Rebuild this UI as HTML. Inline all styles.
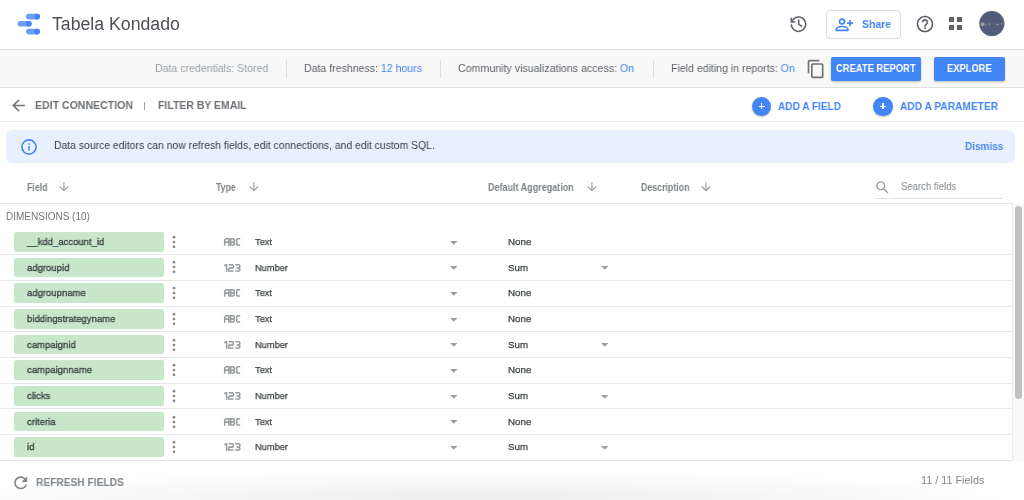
<!DOCTYPE html>
<html><head><meta charset="utf-8">
<style>
*{box-sizing:border-box;margin:0;padding:0}
html,body{width:1024px;height:500px;overflow:hidden;background:#fff;font-family:"Liberation Sans",sans-serif}
.a{position:absolute}
.t{position:absolute;line-height:1;white-space:nowrap;will-change:transform}
svg{position:absolute;overflow:visible}
.chip{position:absolute;left:14px;width:150.2px;height:19.5px;background:#c8e6c9;border-radius:2.5px}
.fn{left:26.5px;-webkit-text-stroke:.3px #3c4043;transform:scaleX(.971);transform-origin:0 0;font-size:9.8px;color:#3c4043}
.dot{position:absolute;left:172.7px;width:2.6px;height:2.6px;border-radius:50%;background:#80868b}
.ic{left:223.8px}
.ty{left:254.8px;-webkit-text-stroke:.25px #3c4043;transform:scaleX(.944);transform-origin:0 0;font-size:9.8px;color:#3c4043}
.ag{left:507.5px;-webkit-text-stroke:.25px #3c4043;transform:scaleX(.992);transform-origin:0 0;font-size:9.8px;color:#3c4043}
.tri{position:absolute;width:0;height:0;border-left:3.8px solid transparent;border-right:3.8px solid transparent;border-top:3.6px solid #80868b}
.rl{position:absolute;left:0;width:1012px;height:1px;background:#e8e8e8}
</style></head><body>
<!-- HEADER -->
<div class="a" style="left:0;top:0;width:1024px;height:49px;background:#fff"></div>
<div class="a" style="left:0;top:49px;width:1024px;height:1px;background:#e0e0e0"></div>
<!-- logo -->
<svg style="left:0;top:0" width="60" height="48">
  <rect x="26" y="13.8" width="14" height="5.6" rx="2.8" fill="#6c9ef5"/>
  <circle cx="37.2" cy="16.6" r="2.8" fill="#4285f4"/>
  <rect x="17.6" y="21" width="14" height="5.6" rx="2.8" fill="#6c9ef5"/>
  <circle cx="28.8" cy="23.8" r="2.8" fill="#4285f4"/>
  <rect x="26" y="28.8" width="14" height="5.6" rx="2.8" fill="#6c9ef5"/>
  <circle cx="37.2" cy="31.6" r="2.8" fill="#4285f4"/>
</svg>
<div id="title" class="t" style="transform:scaleX(1.005);transform-origin:0 0;left:52px;top:16.2px;font-size:17.6px;color:#4d5156">Tabela Kondado</div>

<!-- history icon -->
<svg style="left:787px;top:13px" width="23" height="22" viewBox="0 0 23 22"><g fill="none" stroke="#5f6368" stroke-width="1.55"><path d="M6.4 6.1A7.2 7.2 0 1 1 4.3 11.3"/><path d="M4.3 4.7V8.9H8.4M4.6 8.6L6.6 6.0"/><path d="M11.7 6.6V11.2L15 13.7"/></g></svg>
<!-- share button -->
<div class="a" style="left:826px;top:9.5px;width:74.5px;height:29px;border:1px solid #dadce0;border-radius:4px"></div>
<svg style="left:832px;top:14px" width="26" height="22" viewBox="0 0 26 22"><g fill="none" stroke="#4285f4" stroke-width="1.7"><circle cx="10" cy="7.5" r="2.45"/><path d="M4.3 16.4V15.3C4.3 13.5 7.5 12.5 10.1 12.5S15.9 13.5 15.9 15.3V16.4Z" stroke-linejoin="round"/><path d="M15 9.1H20.9M17.95 5.9V12.3"/></g></svg>
<div id="share" class="t" style="transform:scaleX(0.91);transform-origin:0 0;left:862px;top:18.5px;font-size:11.5px;font-weight:bold;color:#4285f4">Share</div>
<!-- help -->
<svg style="left:914.6px;top:13.9px" width="20" height="20" viewBox="0 0 24 24"><path fill="#5f6368" d="M11 18h2v-2h-2v2zm1-16C6.48 2 2 6.48 2 12s4.48 10 10 10 10-4.48 10-10S17.52 2 12 2zm0 18c-4.41 0-8-3.590-8-8s3.59-8 8-8 8 3.59 8 8-3.59 8-8 8zm0-14c-2.21 0-4 1.79-4 4h2c0-1.1.9-2 2-2s2 .9 2 2c0 2-3 1.75-3 5h2c0-2.25 3-2.5 3-5 0-2.21-1.79-4-4-4z"/></svg>
<!-- apps -->
<div class="a" style="left:949px;top:16.7px;width:5px;height:5px;background:#5f6368"></div>
<div class="a" style="left:957.4px;top:16.7px;width:5px;height:5px;background:#5f6368"></div>
<div class="a" style="left:949px;top:24.8px;width:5px;height:5px;background:#5f6368"></div>
<div class="a" style="left:957.4px;top:24.8px;width:5px;height:5px;background:#5f6368"></div>
<!-- avatar -->
<svg style="left:976px;top:8px" width="32" height="32" viewBox="0 0 32 32">
<circle cx="15.85" cy="15.55" r="12.5" fill="#535b7a" stroke="#7d7f78" stroke-width=".5"/>
<circle cx="6.6" cy="16.3" r="2" fill="#9a9d94"/>
<path d="M10.2 15.8V17.2H11.5M13.5 15.2V17.6M13.5 16H15M17.4 16.3h.8M20.3 15.5V17.4M22 15.5V17.4M20.3 16.5H23M25.2 15.2L26 16.6L27 15.2" fill="none" stroke="#8f9288" stroke-width=".8"/>
</svg>
<!-- TOOLBAR -->
<div class="a" style="left:0;top:50px;width:1024px;height:37px;background:#f8f8f8"></div>
<div class="a" style="left:0;top:87px;width:1024px;height:1px;background:#e0e0e0"></div>
<div id="cred" class="t" style="transform:scaleX(0.96);transform-origin:0 0;left:155px;top:62.5px;font-size:11px;color:#9aa0a6">Data credentials: Stored</div>
<div class="a" style="left:285.5px;top:60px;width:1px;height:18px;background:#e0e0e0"></div>
<div id="fresh" class="t" style="transform:scaleX(0.96);transform-origin:0 0;left:304px;top:62.5px;font-size:11px;color:#5f6368">Data freshness: <span style="color:#4285f4">12 hours</span></div>
<div class="a" style="left:439.5px;top:60px;width:1px;height:18px;background:#e0e0e0"></div>
<div id="comm" class="t" style="transform:scaleX(0.967);transform-origin:0 0;left:458px;top:62.5px;font-size:11px;color:#5f6368">Community visualizations access: <span style="color:#4285f4">On</span></div>
<div class="a" style="left:652.5px;top:60px;width:1px;height:18px;background:#e0e0e0"></div>
<div id="fedit" class="t" style="transform:scaleX(0.96);transform-origin:0 0;left:671px;top:62.5px;font-size:11px;color:#5f6368">Field editing in reports: <span style="color:#4285f4">On</span></div>
<!-- copy icon -->
<svg style="left:805.7px;top:59.2px" width="20" height="20" viewBox="0 0 24 24"><path fill="#707070" d="M16 1H4c-1.1 0-2 .9-2 2v14h2V3h12V1zm3 4H8c-1.1 0-2 .9-2 2v14c0 1.1.9 2 2 2h11c1.1 0 2-.9 2-2V7c0-1.1-.9-2-2-2zm0 16H8V7h11v14z"/></svg>
<div class="a" style="left:831.4px;top:57.1px;width:89.6px;height:23.6px;background:#4285f4;border-radius:2px;box-shadow:0 1px 2px rgba(0,0,0,.25)"></div>
<div id="cr" class="t" style="transform:scaleX(0.893);transform-origin:0 0;left:836.3px;top:62.8px;font-size:10.5px;font-weight:bold;color:#fff">CREATE REPORT</div>
<div class="a" style="left:934.3px;top:57.1px;width:70.4px;height:23.6px;background:#4285f4;border-radius:2px;box-shadow:0 1px 2px rgba(0,0,0,.25)"></div>
<div id="ex" class="t" style="transform:scaleX(0.89);transform-origin:0 0;left:947.3px;top:62.8px;font-size:10.5px;font-weight:bold;color:#fff">EXPLORE</div>

<!-- NAV ROW -->
<div class="a" style="left:0;top:121px;width:1024px;height:1px;background:#eeeeee"></div>
<svg style="left:9.15px;top:95.65px" width="19" height="19" viewBox="0 0 24 24"><path fill="#6f7173" d="M20 11H7.83l5.59-5.59L12 4l-8 8 8 8 1.41-1.41L7.83 13H20v-2z"/></svg>
<div id="editc" class="t" style="transform:scaleX(0.944);transform-origin:0 0;left:34.8px;top:99.5px;font-size:11.2px;font-weight:bold;color:#6d7175">EDIT CONNECTION</div>
<div class="a" style="left:144px;top:101.5px;width:1px;height:8px;background:#a0a0a0"></div>
<div id="filt" class="t" style="transform:scaleX(0.936);transform-origin:0 0;left:157.6px;top:99.5px;font-size:11.2px;font-weight:bold;color:#6d7175">FILTER BY EMAIL</div>
<div class="a" style="left:752.1px;top:96.9px;width:19.3px;height:19.3px;border-radius:50%;background:#4285f4;box-shadow:0 1px 2px rgba(0,0,0,.25)"></div>
<div class="a" style="left:758.5px;top:105.5px;width:6px;height:1.8px;background:#fff"></div>
<div class="a" style="left:760.6px;top:103.4px;width:1.8px;height:6px;background:#fff"></div>
<div id="addf" class="t" style="transform:scaleX(0.9);transform-origin:0 0;left:778px;top:101.4px;font-size:11.2px;font-weight:bold;color:#4285f4">ADD A FIELD</div>
<div class="a" style="left:873.3px;top:96.9px;width:19.3px;height:19.3px;border-radius:50%;background:#4285f4;box-shadow:0 1px 2px rgba(0,0,0,.25)"></div>
<div class="a" style="left:880px;top:105.5px;width:6px;height:1.8px;background:#fff"></div>
<div class="a" style="left:882.1px;top:103.4px;width:1.8px;height:6px;background:#fff"></div>
<div id="addp" class="t" style="transform:scaleX(0.91);transform-origin:0 0;left:900px;top:101.4px;font-size:11.2px;font-weight:bold;color:#4285f4">ADD A PARAMETER</div>

<!-- BANNER -->
<div class="a" style="left:6px;top:130.4px;width:1009px;height:32.2px;background:#e8f0fe;border-radius:6px"></div>
<svg style="left:20.5px;top:138.5px" width="16" height="16" viewBox="0 0 16 16">
  <circle cx="8" cy="8" r="7.1" fill="none" stroke="#4285f4" stroke-width="1.6"/>
  <rect x="7.25" y="7" width="1.5" height="4.6" fill="#4285f4"/>
  <rect x="7.25" y="4.3" width="1.5" height="1.5" fill="#4285f4"/>
</svg>
<div id="bantxt" class="t" style="transform:scaleX(0.945);transform-origin:0 0;left:54px;top:140px;font-size:11px;color:#3c4043">Data source editors can now refresh fields, edit connections, and edit custom SQL.</div>
<div id="dismiss" class="t" style="transform:scaleX(0.91);transform-origin:0 0;left:965px;top:140.5px;font-size:11px;font-weight:bold;color:#4a88f2">Dismiss</div>

<!-- COLUMN HEADERS -->
<div id="hfield" class="t" style="transform:scaleX(0.88);transform-origin:0 0;left:26.7px;top:182.5px;font-size:10px;font-weight:bold;color:#7f8386">Field</div>
<div id="htype" class="t" style="transform:scaleX(0.875);transform-origin:0 0;left:216px;top:182.5px;font-size:10px;font-weight:bold;color:#7f8386">Type</div>
<div id="hagg" class="t" style="transform:scaleX(0.9);transform-origin:0 0;left:488px;top:182.5px;font-size:10px;font-weight:bold;color:#7f8386">Default Aggregation</div>
<div id="hdesc" class="t" style="transform:scaleX(0.88);transform-origin:0 0;left:641px;top:182.5px;font-size:10px;font-weight:bold;color:#7f8386">Description</div>
<svg style="left:57.1px;top:180.4px" width="13.8" height="13.8" viewBox="0 0 24 24"><path fill="#9aa0a6" d="M20 12l-1.41-1.41L13 16.17V4h-2v12.17l-5.58-5.59L4 12l8 8 8-8z"/></svg>
<svg style="left:246.5px;top:180.4px" width="13.8" height="13.8" viewBox="0 0 24 24"><path fill="#9aa0a6" d="M20 12l-1.41-1.41L13 16.17V4h-2v12.17l-5.58-5.59L4 12l8 8 8-8z"/></svg>
<svg style="left:585.1px;top:180.4px" width="13.8" height="13.8" viewBox="0 0 24 24"><path fill="#9aa0a6" d="M20 12l-1.41-1.41L13 16.17V4h-2v12.17l-5.58-5.59L4 12l8 8 8-8z"/></svg>
<svg style="left:699.3px;top:180.4px" width="13.8" height="13.8" viewBox="0 0 24 24"><path fill="#9aa0a6" d="M20 12l-1.41-1.41L13 16.17V4h-2v12.17l-5.58-5.59L4 12l8 8 8-8z"/></svg>
<!-- search -->
<svg style="left:874px;top:179px" width="17" height="17" viewBox="0 0 24 24"><path fill="#9aa0a6" d="M15.5 14h-.79l-.28-.27A6.471 6.471 0 0 0 16 9.5 6.5 6.5 0 1 0 9.5 16c1.61 0 3.09-.59 4.23-1.57l.27.28v.79l5 4.99L20.49 19l-4.99-5zm-6 0C7.01 14 5 11.99 5 9.5S7.01 5 9.5 5 14 7.01 14 9.5 11.99 14 9.5 14z"/></svg>
<div id="search" class="t" style="transform:scaleX(0.956);transform-origin:0 0;left:900.5px;top:182px;font-size:10px;color:#80868b">Search fields</div>
<div class="a" style="left:875px;top:198px;width:128px;height:1px;background:#e0e0e0"></div>
<div class="a" style="left:0;top:203px;width:1012px;height:1px;background:#dfdfdf"></div>

<div id="dims" class="t" style="left:6px;top:211.5px;font-size:10px;color:#757575">DIMENSIONS (10)</div>

<!-- scrollbar -->
<div class="a" style="left:1012px;top:203px;width:12px;height:258px;background:#fafafa;border-left:1px solid #ebebeb"></div>
<div class="a" style="left:1015px;top:206px;width:6.8px;height:193px;border-radius:3.4px;background:#c1c1c1"></div>
<div class="a" style="left:0;top:459.5px;width:1012px;height:1.2px;background:#e2e2e2"></div>

<div id="rows">
<div class="chip" style="top:232.00px"></div>
<div class="t fn" style="top:236.90px">__kdd_account_id</div>
<svg style="left:170px;top:233.80px" width="8" height="16" viewBox="0 0 8 16"><g fill="#85888a"><circle cx="4" cy="3.2" r="1.35"/><circle cx="4" cy="8" r="1.35"/><circle cx="4" cy="12.8" r="1.35"/></g></svg>
<svg class="ic" style="top:237.95px" width="17" height="8" viewBox="0 0 17 8"><path d="M0.7 7.7V2.1L2.1 0.7H4.8V7.7M0.7 4.1H4.8M6.6 0V7.7M6.6 0.7H9.4L10.3 1.6V3.2L9.4 4.1H6.6M9.4 4.1L10.3 5V6.1L9.4 7H6.6M16.2 0.7H13.5L12.7 1.5V6.2L13.5 7H16.2" fill="none" stroke="#999c9e" stroke-width="1.55"/></svg>
<div class="t ty" style="top:236.90px">Text</div>
<svg style="left:449.5px;top:240.60px" width="7.5" height="4" viewBox="0 0 7.5 4"><path d="M0 0H7.5L3.75 3.75Z" fill="#9e9e9e"/></svg>
<div class="t ag" style="top:236.90px">None</div>
<div class="rl" style="top:254.30px"></div>
<div class="chip" style="top:257.68px"></div>
<div class="t fn" style="top:262.58px">adgroupid</div>
<svg style="left:170px;top:259.48px" width="8" height="16" viewBox="0 0 8 16"><g fill="#85888a"><circle cx="4" cy="3.2" r="1.35"/><circle cx="4" cy="8" r="1.35"/><circle cx="4" cy="12.8" r="1.35"/></g></svg>
<svg class="ic" style="top:263.63px" width="17" height="8" viewBox="0 0 17 8"><path d="M0.2 1.9L2.0 0.7H2.6V7.7M4.7 0.7H8.5L9.3 1.5V3.2L8.5 4.1H5.5L4.7 4.9V7H9.5M11.2 0.7H15L15.8 1.5V3.2L15 4.1H12.6M15 4.1L15.8 4.9V6.2L15 7H11.2" fill="none" stroke="#999c9e" stroke-width="1.55"/></svg>
<div class="t ty" style="top:262.58px">Number</div>
<svg style="left:449.5px;top:266.28px" width="7.5" height="4" viewBox="0 0 7.5 4"><path d="M0 0H7.5L3.75 3.75Z" fill="#9e9e9e"/></svg>
<div class="t ag" style="top:262.58px">Sum</div>
<svg style="left:601.3px;top:266.28px" width="7.5" height="4" viewBox="0 0 7.5 4"><path d="M0 0H7.5L3.75 3.75Z" fill="#9e9e9e"/></svg>
<div class="rl" style="top:279.98px"></div>
<div class="chip" style="top:283.36px"></div>
<div class="t fn" style="top:288.26px">adgroupname</div>
<svg style="left:170px;top:285.16px" width="8" height="16" viewBox="0 0 8 16"><g fill="#85888a"><circle cx="4" cy="3.2" r="1.35"/><circle cx="4" cy="8" r="1.35"/><circle cx="4" cy="12.8" r="1.35"/></g></svg>
<svg class="ic" style="top:289.31px" width="17" height="8" viewBox="0 0 17 8"><path d="M0.7 7.7V2.1L2.1 0.7H4.8V7.7M0.7 4.1H4.8M6.6 0V7.7M6.6 0.7H9.4L10.3 1.6V3.2L9.4 4.1H6.6M9.4 4.1L10.3 5V6.1L9.4 7H6.6M16.2 0.7H13.5L12.7 1.5V6.2L13.5 7H16.2" fill="none" stroke="#999c9e" stroke-width="1.55"/></svg>
<div class="t ty" style="top:288.26px">Text</div>
<svg style="left:449.5px;top:291.96px" width="7.5" height="4" viewBox="0 0 7.5 4"><path d="M0 0H7.5L3.75 3.75Z" fill="#9e9e9e"/></svg>
<div class="t ag" style="top:288.26px">None</div>
<div class="rl" style="top:305.66px"></div>
<div class="chip" style="top:309.04px"></div>
<div class="t fn" style="top:313.94px">biddingstrategyname</div>
<svg style="left:170px;top:310.84px" width="8" height="16" viewBox="0 0 8 16"><g fill="#85888a"><circle cx="4" cy="3.2" r="1.35"/><circle cx="4" cy="8" r="1.35"/><circle cx="4" cy="12.8" r="1.35"/></g></svg>
<svg class="ic" style="top:314.99px" width="17" height="8" viewBox="0 0 17 8"><path d="M0.7 7.7V2.1L2.1 0.7H4.8V7.7M0.7 4.1H4.8M6.6 0V7.7M6.6 0.7H9.4L10.3 1.6V3.2L9.4 4.1H6.6M9.4 4.1L10.3 5V6.1L9.4 7H6.6M16.2 0.7H13.5L12.7 1.5V6.2L13.5 7H16.2" fill="none" stroke="#999c9e" stroke-width="1.55"/></svg>
<div class="t ty" style="top:313.94px">Text</div>
<svg style="left:449.5px;top:317.64px" width="7.5" height="4" viewBox="0 0 7.5 4"><path d="M0 0H7.5L3.75 3.75Z" fill="#9e9e9e"/></svg>
<div class="t ag" style="top:313.94px">None</div>
<div class="rl" style="top:331.34px"></div>
<div class="chip" style="top:334.72px"></div>
<div class="t fn" style="top:339.62px">campaignid</div>
<svg style="left:170px;top:336.52px" width="8" height="16" viewBox="0 0 8 16"><g fill="#85888a"><circle cx="4" cy="3.2" r="1.35"/><circle cx="4" cy="8" r="1.35"/><circle cx="4" cy="12.8" r="1.35"/></g></svg>
<svg class="ic" style="top:340.67px" width="17" height="8" viewBox="0 0 17 8"><path d="M0.2 1.9L2.0 0.7H2.6V7.7M4.7 0.7H8.5L9.3 1.5V3.2L8.5 4.1H5.5L4.7 4.9V7H9.5M11.2 0.7H15L15.8 1.5V3.2L15 4.1H12.6M15 4.1L15.8 4.9V6.2L15 7H11.2" fill="none" stroke="#999c9e" stroke-width="1.55"/></svg>
<div class="t ty" style="top:339.62px">Number</div>
<svg style="left:449.5px;top:343.32px" width="7.5" height="4" viewBox="0 0 7.5 4"><path d="M0 0H7.5L3.75 3.75Z" fill="#9e9e9e"/></svg>
<div class="t ag" style="top:339.62px">Sum</div>
<svg style="left:601.3px;top:343.32px" width="7.5" height="4" viewBox="0 0 7.5 4"><path d="M0 0H7.5L3.75 3.75Z" fill="#9e9e9e"/></svg>
<div class="rl" style="top:357.02px"></div>
<div class="chip" style="top:360.40px"></div>
<div class="t fn" style="top:365.30px">campaignname</div>
<svg style="left:170px;top:362.20px" width="8" height="16" viewBox="0 0 8 16"><g fill="#85888a"><circle cx="4" cy="3.2" r="1.35"/><circle cx="4" cy="8" r="1.35"/><circle cx="4" cy="12.8" r="1.35"/></g></svg>
<svg class="ic" style="top:366.35px" width="17" height="8" viewBox="0 0 17 8"><path d="M0.7 7.7V2.1L2.1 0.7H4.8V7.7M0.7 4.1H4.8M6.6 0V7.7M6.6 0.7H9.4L10.3 1.6V3.2L9.4 4.1H6.6M9.4 4.1L10.3 5V6.1L9.4 7H6.6M16.2 0.7H13.5L12.7 1.5V6.2L13.5 7H16.2" fill="none" stroke="#999c9e" stroke-width="1.55"/></svg>
<div class="t ty" style="top:365.30px">Text</div>
<svg style="left:449.5px;top:369.00px" width="7.5" height="4" viewBox="0 0 7.5 4"><path d="M0 0H7.5L3.75 3.75Z" fill="#9e9e9e"/></svg>
<div class="t ag" style="top:365.30px">None</div>
<div class="rl" style="top:382.70px"></div>
<div class="chip" style="top:386.08px"></div>
<div class="t fn" style="top:390.98px">clicks</div>
<svg style="left:170px;top:387.88px" width="8" height="16" viewBox="0 0 8 16"><g fill="#85888a"><circle cx="4" cy="3.2" r="1.35"/><circle cx="4" cy="8" r="1.35"/><circle cx="4" cy="12.8" r="1.35"/></g></svg>
<svg class="ic" style="top:392.03px" width="17" height="8" viewBox="0 0 17 8"><path d="M0.2 1.9L2.0 0.7H2.6V7.7M4.7 0.7H8.5L9.3 1.5V3.2L8.5 4.1H5.5L4.7 4.9V7H9.5M11.2 0.7H15L15.8 1.5V3.2L15 4.1H12.6M15 4.1L15.8 4.9V6.2L15 7H11.2" fill="none" stroke="#999c9e" stroke-width="1.55"/></svg>
<div class="t ty" style="top:390.98px">Number</div>
<svg style="left:449.5px;top:394.68px" width="7.5" height="4" viewBox="0 0 7.5 4"><path d="M0 0H7.5L3.75 3.75Z" fill="#9e9e9e"/></svg>
<div class="t ag" style="top:390.98px">Sum</div>
<svg style="left:601.3px;top:394.68px" width="7.5" height="4" viewBox="0 0 7.5 4"><path d="M0 0H7.5L3.75 3.75Z" fill="#9e9e9e"/></svg>
<div class="rl" style="top:408.38px"></div>
<div class="chip" style="top:411.76px"></div>
<div class="t fn" style="top:416.66px">criteria</div>
<svg style="left:170px;top:413.56px" width="8" height="16" viewBox="0 0 8 16"><g fill="#85888a"><circle cx="4" cy="3.2" r="1.35"/><circle cx="4" cy="8" r="1.35"/><circle cx="4" cy="12.8" r="1.35"/></g></svg>
<svg class="ic" style="top:417.71px" width="17" height="8" viewBox="0 0 17 8"><path d="M0.7 7.7V2.1L2.1 0.7H4.8V7.7M0.7 4.1H4.8M6.6 0V7.7M6.6 0.7H9.4L10.3 1.6V3.2L9.4 4.1H6.6M9.4 4.1L10.3 5V6.1L9.4 7H6.6M16.2 0.7H13.5L12.7 1.5V6.2L13.5 7H16.2" fill="none" stroke="#999c9e" stroke-width="1.55"/></svg>
<div class="t ty" style="top:416.66px">Text</div>
<svg style="left:449.5px;top:420.36px" width="7.5" height="4" viewBox="0 0 7.5 4"><path d="M0 0H7.5L3.75 3.75Z" fill="#9e9e9e"/></svg>
<div class="t ag" style="top:416.66px">None</div>
<div class="rl" style="top:434.06px"></div>
<div class="chip" style="top:437.44px"></div>
<div class="t fn" style="top:442.34px">id</div>
<svg style="left:170px;top:439.24px" width="8" height="16" viewBox="0 0 8 16"><g fill="#85888a"><circle cx="4" cy="3.2" r="1.35"/><circle cx="4" cy="8" r="1.35"/><circle cx="4" cy="12.8" r="1.35"/></g></svg>
<svg class="ic" style="top:443.39px" width="17" height="8" viewBox="0 0 17 8"><path d="M0.2 1.9L2.0 0.7H2.6V7.7M4.7 0.7H8.5L9.3 1.5V3.2L8.5 4.1H5.5L4.7 4.9V7H9.5M11.2 0.7H15L15.8 1.5V3.2L15 4.1H12.6M15 4.1L15.8 4.9V6.2L15 7H11.2" fill="none" stroke="#999c9e" stroke-width="1.55"/></svg>
<div class="t ty" style="top:442.34px">Number</div>
<svg style="left:449.5px;top:446.04px" width="7.5" height="4" viewBox="0 0 7.5 4"><path d="M0 0H7.5L3.75 3.75Z" fill="#9e9e9e"/></svg>
<div class="t ag" style="top:442.34px">Sum</div>
<svg style="left:601.3px;top:446.04px" width="7.5" height="4" viewBox="0 0 7.5 4"><path d="M0 0H7.5L3.75 3.75Z" fill="#9e9e9e"/></svg>
</div><!--/rows-->

<!-- FOOTER -->
<div class="a" style="left:0;top:461px;width:1024px;height:39px;background:#fff"></div><div class="a" style="left:0;top:461px;width:1024px;height:39px;background:radial-gradient(ellipse 560px 34px at 480px 41px,rgba(0,0,0,.075),rgba(0,0,0,0))"></div>
<svg style="left:10.5px;top:472.75px" width="19.5" height="19.5" viewBox="0 0 24 24"><path fill="#80868b" d="M17.65 6.35A7.958 7.958 0 0 0 12 4c-4.42 0-7.99 3.58-7.99 8s3.57 8 7.99 8c3.73 0 6.84-2.55 7.73-6h-2.08A5.99 5.99 0 0 1 12 18c-3.31 0-6-2.690-6-6s2.69-6 6-6c1.66 0 3.14.69 4.22 1.78L13 11h7V4l-2.350 2.35z"/></svg>
<div id="refresh" class="t" style="transform:scaleX(0.926);transform-origin:0 0;left:36.3px;top:477px;font-size:11px;font-weight:bold;color:#80868b">REFRESH FIELDS</div>
<div id="count" class="t" style="transform:scaleX(1.03);transform-origin:0 0;left:921px;top:475px;font-size:10.5px;color:#80868b">11 / 11 Fields</div>
</body></html>
